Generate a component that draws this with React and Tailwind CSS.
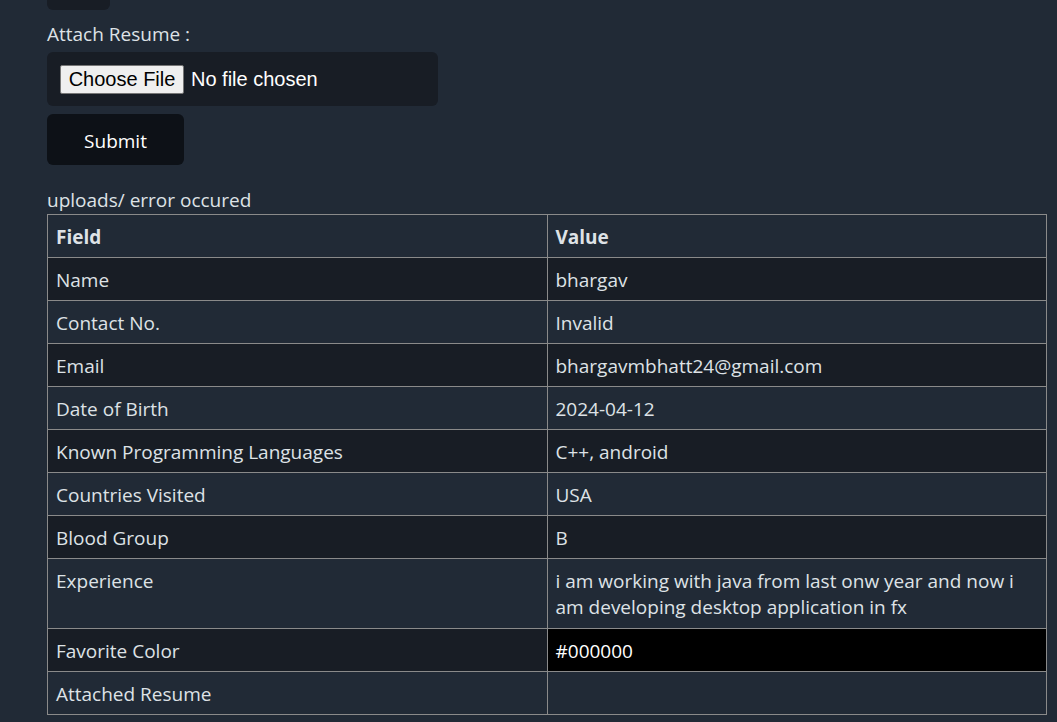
import React from "react";

const rows = [
  ["Name", "bhargav"],
  ["Contact No.", "Invalid"],
  ["Email", "bhargavmbhatt24@gmail.com"],
  ["Date of Birth", "2024-04-12"],
  ["Known Programming Languages", "C++, android"],
  ["Countries Visited", "USA"],
  ["Blood Group", "B"],
  ["Experience", "i am working with java from last onw year and now i am developing desktop application in fx"],
  ["Favorite Color", "#000000"],
  ["Attached Resume", ""],
];

export default function App() {
  return (
    <div
      className="min-h-[722px] w-full overflow-hidden bg-[#212a36] pl-[47px] text-[19px] leading-[27px] text-[#dee2e6]"
      style={{ fontFamily: '"Open Sans", "Noto Sans", sans-serif' }}
    >
      <div className="mt-[-30px] h-[40px] w-[63px] rounded-md bg-[#181d25]" />
      <div className="mt-[11px]">Attach Resume :</div>
      <div className="mt-[4px] flex h-[54px] w-[391px] items-center rounded-md bg-[#181d25] pl-[13px]">
        <span
          className="flex h-[29px] w-[124px] items-center justify-center rounded-[2px] border border-[#767676] bg-[#efefef] text-[20px] text-black"
          style={{ fontFamily: '"Liberation Sans", Arial, sans-serif' }}
        >
          Choose File
        </span>
        <span
          className="ml-[7px] text-[20px] text-white"
          style={{ fontFamily: '"Liberation Sans", Arial, sans-serif' }}
        >
          No file chosen
        </span>
      </div>
      <button className="mt-[8px] flex h-[51px] w-[137px] items-center justify-center rounded-md bg-[#0d1117] pt-[3px] text-white">
        Submit
      </button>
      <div className="mt-[22px] h-[27px]">uploads/ error occured</div>
      <table className="w-[1000px] table-fixed border-collapse leading-[26px]">
        <thead>
          <tr>
            <th className="border border-[#8a8a8a] px-[8px] pb-[7px] pt-[9px] text-left font-bold">Field</th>
            <th className="border border-[#8a8a8a] px-[8px] pb-[7px] pt-[9px] text-left font-bold">Value</th>
          </tr>
        </thead>
        <tbody>
          {rows.map(([f, v], i) => {
            const dark = i % 2 === 0;
            const isColor = f === "Favorite Color";
            const isExp = f === "Experience";
            const pad = isExp
              ? "px-[8px] pb-[8px] pt-[9px]"
              : "px-[8px] pb-[7px] pt-[9px]";
            return (
              <tr key={f} className={dark ? "bg-[#181d25]" : "bg-[#212a36]"}>
                <td className={"border border-[#8a8a8a] align-top " + pad}>{f}</td>
                <td
                  className={
                    "border border-[#8a8a8a] align-top " +
                    pad +
                    (isColor ? " bg-black text-white" : "")
                  }
                >
                  {v}
                  {v === "" && <span>&nbsp;</span>}
                </td>
              </tr>
            );
          })}
        </tbody>
      </table>
    </div>
  );
}
